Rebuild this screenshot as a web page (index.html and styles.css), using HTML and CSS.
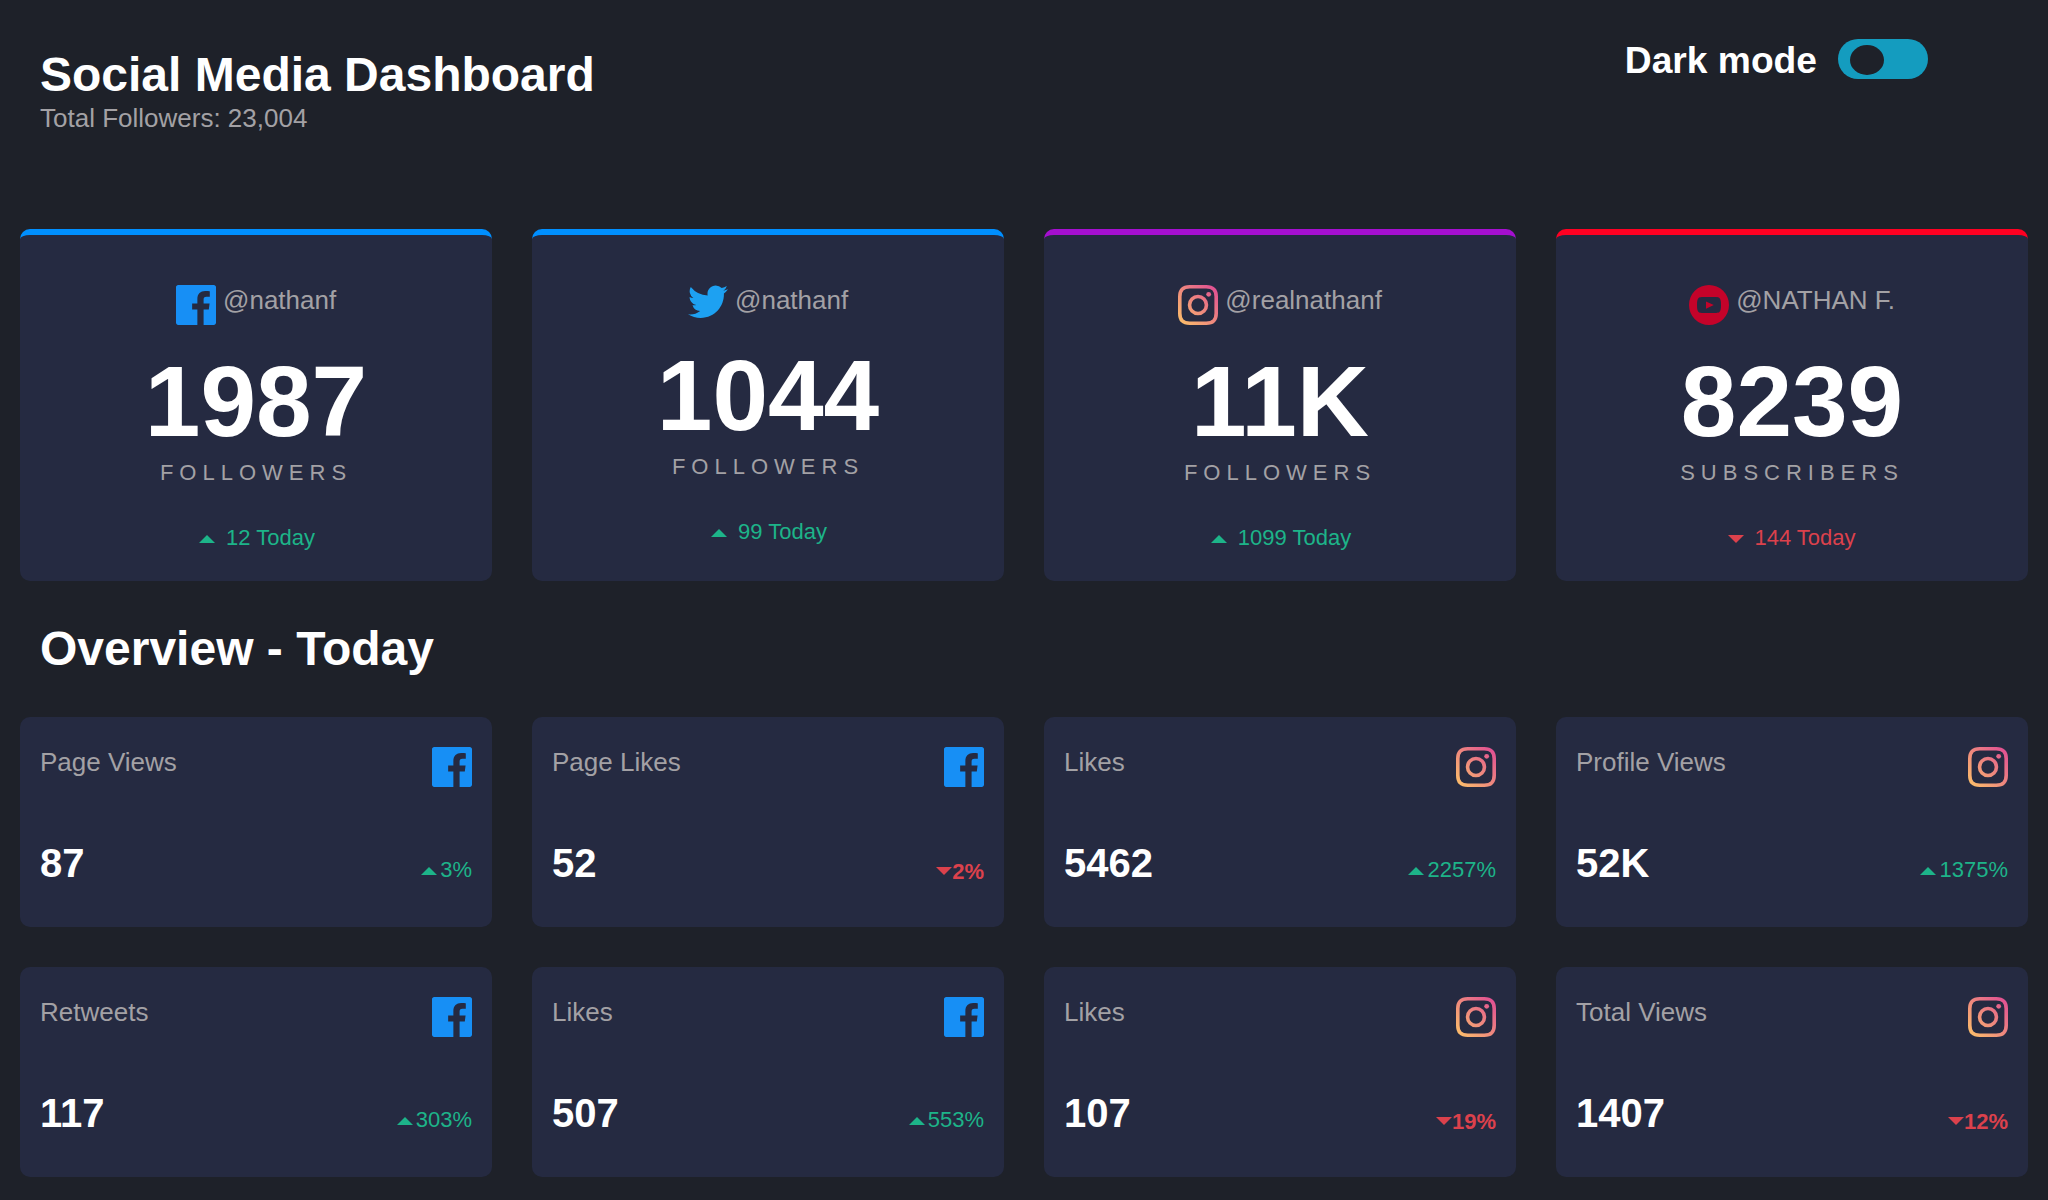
FILE: index.html
```html
<!DOCTYPE html>
<html lang="en">
<head>
<meta charset="utf-8">
<title>Social Media Dashboard</title>
<link rel="stylesheet" href="styles.css">
</head>
<body>
<svg class="sprite" aria-hidden="true">
  <defs>
    <linearGradient id="ig" x1="0" y1="20" x2="20" y2="0" gradientUnits="userSpaceOnUse">
      <stop offset="0" stop-color="#fdc468"/>
      <stop offset=".5" stop-color="#ee877e"/>
      <stop offset="1" stop-color="#df4896"/>
    </linearGradient>
    <symbol id="facebook" viewBox="0 0 20 20"><path fill="#178ff5" d="M18.896 0H1.104C.494 0 0 .494 0 1.104v17.793C0 19.506.494 20 1.104 20h9.58v-7.745H8.076V9.237h2.606V7.01c0-2.583 1.578-3.99 3.883-3.99 1.104 0 2.052.082 2.329.119v2.7h-1.598c-1.254 0-1.496.597-1.496 1.47v1.928h2.989l-.39 3.018h-2.6V20h5.098c.608 0 1.102-.494 1.102-1.104V1.104C20 .494 19.506 0 18.896 0z"/></symbol>
    <symbol id="twitter" viewBox="0 0 20 17"><path fill="#1da1f2" d="M20 2.172a8.192 8.192 0 01-2.357.646 4.11 4.11 0 001.805-2.27 8.22 8.22 0 01-2.606.996A4.096 4.096 0 0013.847.248c-2.65 0-4.596 2.472-3.998 5.037A11.648 11.648 0 011.392 1a4.109 4.109 0 001.27 5.478 4.086 4.086 0 01-1.858-.513c-.045 1.9 1.318 3.679 3.291 4.075a4.113 4.113 0 01-1.853.07 4.106 4.106 0 003.833 2.849A8.25 8.25 0 010 14.658a11.616 11.616 0 006.29 1.843c7.618 0 11.922-6.434 11.662-12.205A8.354 8.354 0 0020 2.172z"/></symbol>
    <symbol id="instagram" viewBox="0 0 20 20">
      <path fill="none" stroke="url(#ig)" stroke-width="1.8" d="M5.9.9h8.2C17.6.9 19.1 2.4 19.1 5.900v8.200c0 3.500-1.500 5-5 5H5.900c-3.500 0-5-1.500-5-5V5.900C.9 2.400 2.400.9 5.900.9z"/>
      <circle cx="10" cy="10" r="4.230" fill="none" stroke="url(#ig)" stroke-width="1.800"/>
      <circle cx="15.340" cy="4.660" r="1.200" fill="url(#ig)"/>
    </symbol>
    <symbol id="youtube" viewBox="0 0 20 20"><path fill="#c4032a" fill-rule="evenodd" d="M10 0a10 10 0 100 20 10 10 0 000-20zM10 6c4.500 0 4.800.1 5.200.5.600.6.800 1.600.8 3.500s-.2 2.900-.8 3.500c-.4.4-.7.5-5.200.5s-4.800-.1-5.200-.5C4.200 12.900 4 11.900 4 10s.2-2.900.8-3.500C5.200 6.100 5.500 6 10 6zM8.500 8.200v3.700L12.400 10z"/></symbol>
  </defs>
</svg>

<header class="header">
  <div class="heading">
    <h1 class="title">Social Media Dashboard</h1>
    <p class="total">Total Followers: 23,004</p>
  </div>
  <div class="mode">
    <span class="mode-label">Dark mode</span>
    <div class="switch"><div class="knob"></div></div>
  </div>
</header>

<main>
  <section class="followers">
    <article class="card blue">
      <div class="handle"><svg class="icon"><use href="#facebook"/></svg> @nathanf</div>
      <div class="count">1987</div>
      <div class="unit">FOLLOWERS</div>
      <div class="today up"><i class="arrow"></i>12 Today</div>
    </article>
    <article class="card blue">
      <div class="handle"><svg class="icon short"><use href="#twitter"/></svg> @nathanf</div>
      <div class="count">1044</div>
      <div class="unit">FOLLOWERS</div>
      <div class="today up"><i class="arrow"></i>99 Today</div>
    </article>
    <article class="card purple">
      <div class="handle"><svg class="icon"><use href="#instagram"/></svg> @realnathanf</div>
      <div class="count">11K</div>
      <div class="unit">FOLLOWERS</div>
      <div class="today up"><i class="arrow"></i>1099 Today</div>
    </article>
    <article class="card red">
      <div class="handle"><svg class="icon"><use href="#youtube"/></svg> @NATHAN F.</div>
      <div class="count">8239</div>
      <div class="unit">SUBSCRIBERS</div>
      <div class="today down"><i class="arrow"></i>144 Today</div>
    </article>
  </section>

  <h2 class="overview-title">Overview - Today</h2>

  <section class="overview">
    <article class="stat">
      <div class="row"><span class="name">Page Views</span><svg class="icon"><use href="#facebook"/></svg></div>
      <div class="row"><span class="value">87</span><span class="change up"><i class="arrow"></i>3%</span></div>
    </article>
    <article class="stat">
      <div class="row"><span class="name">Page Likes</span><svg class="icon"><use href="#facebook"/></svg></div>
      <div class="row"><span class="value">52</span><span class="change down"><i class="arrow"></i>2%</span></div>
    </article>
    <article class="stat">
      <div class="row"><span class="name">Likes</span><svg class="icon"><use href="#instagram"/></svg></div>
      <div class="row"><span class="value">5462</span><span class="change up"><i class="arrow"></i>2257%</span></div>
    </article>
    <article class="stat">
      <div class="row"><span class="name">Profile Views</span><svg class="icon"><use href="#instagram"/></svg></div>
      <div class="row"><span class="value">52K</span><span class="change up"><i class="arrow"></i>1375%</span></div>
    </article>
    <article class="stat">
      <div class="row"><span class="name">Retweets</span><svg class="icon"><use href="#facebook"/></svg></div>
      <div class="row"><span class="value">117</span><span class="change up"><i class="arrow"></i>303%</span></div>
    </article>
    <article class="stat">
      <div class="row"><span class="name">Likes</span><svg class="icon"><use href="#facebook"/></svg></div>
      <div class="row"><span class="value">507</span><span class="change up"><i class="arrow"></i>553%</span></div>
    </article>
    <article class="stat">
      <div class="row"><span class="name">Likes</span><svg class="icon"><use href="#instagram"/></svg></div>
      <div class="row"><span class="value">107</span><span class="change down"><i class="arrow"></i>19%</span></div>
    </article>
    <article class="stat">
      <div class="row"><span class="name">Total Views</span><svg class="icon"><use href="#instagram"/></svg></div>
      <div class="row"><span class="value">1407</span><span class="change down"><i class="arrow"></i>12%</span></div>
    </article>
  </section>
</main>
</body>
</html>
```
FILE: styles.css
```css
* {
  box-sizing: border-box;
}

body {
  margin: 0;
  height: 1200px;
  overflow: hidden;
  background: #1e2129;
  color: #fff;
  font-family: Arial, "Liberation Sans", sans-serif;
  font-size: 26px;
}

h1, h2, p {
  margin: 0;
}

.sprite {
  display: block;
  width: 0;
  height: 0;
}

.icon {
  width: 40px;
  height: 40px;
}

.icon.short {
  height: 34px;
}

/* Header */
.header {
  display: flex;
  justify-content: space-between;
  height: 229px;
  padding: 39px 120px 0 40px;
}

.title {
  margin-top: 8px;
  font-size: 48px;
  line-height: 55px;
}

.total {
  color: #a3a1a5;
  line-height: 32px;
}

.mode {
  display: flex;
  gap: 21px;
  height: 40px;
}

.mode-label {
  font-size: 37.2px;
  font-weight: bold;
  line-height: 42px;
}

.switch {
  width: 90px;
  height: 40px;
  padding: 6px 12px;
  border-radius: 20px;
  background: #149cbf;
}

.knob {
  width: 34px;
  height: 30px;
  border-radius: 50%;
  background: #1e2129;
}

/* Follower cards */
.followers,
.overview {
  display: grid;
  grid-template-columns: repeat(4, 1fr);
  gap: 40px;
  padding: 0 20px;
}

.card {
  height: 352px;
  padding-top: 50px;
  border-top: 6px solid;
  border-radius: 10px;
  background: #252a41;
  text-align: center;
}

.blue { border-color: #008fff; }
.purple { border-color: #a50fd0; }
.red { border-color: #ff0022; }

.handle {
  color: #a3a1a5;
  line-height: 30px;
}

.handle .icon {
  vertical-align: top;
}

.count {
  margin-top: 19px;
  color: #fff;
  font-size: 100px;
  font-weight: bold;
  line-height: 114px;
}

.unit {
  margin-top: 2px;
  color: #a3a1a5;
  font-size: 22px;
  line-height: 26px;
  letter-spacing: 6px;
}

.today {
  margin-top: 39px;
  font-size: 22px;
  line-height: 26px;
}

.arrow {
  display: inline-block;
  border: solid transparent;
  border-width: 0 8px;
}

.up { color: #1db489; }
.down { color: #dc414c; }

.up .arrow { border-bottom: 8px solid #1db489; }
.down .arrow { border-top: 8px solid #dc414c; }

.today .arrow {
  margin-right: 11px;
  vertical-align: 2px;
}

.today.up {
  padding-left: 2px;
}

.today.down .arrow {
  margin-right: 10px;
}

/* Overview */
.overview-title {
  padding: 40px 40px 0;
  height: 136px;
  font-size: 48px;
  line-height: 55px;
}

.stat {
  display: flex;
  flex-direction: column;
  justify-content: space-between;
  height: 210px;
  padding: 30px 20px 41px;
  border-radius: 10px;
  background: #252a41;
}

.row {
  display: flex;
  justify-content: space-between;
}

.name {
  color: #a3a1a5;
  line-height: 30px;
}

.value {
  font-size: 40px;
  font-weight: bold;
  line-height: 46px;
}

.change {
  padding-top: 18px;
  font-size: 22px;
  line-height: 24px;
}

.change.down {
  padding-top: 20px;
  font-weight: bold;
}

.change .arrow {
  vertical-align: 2px;
}

.change.up .arrow {
  margin-right: 3px;
}

.change.down .arrow {
  vertical-align: 4px;
}
```
